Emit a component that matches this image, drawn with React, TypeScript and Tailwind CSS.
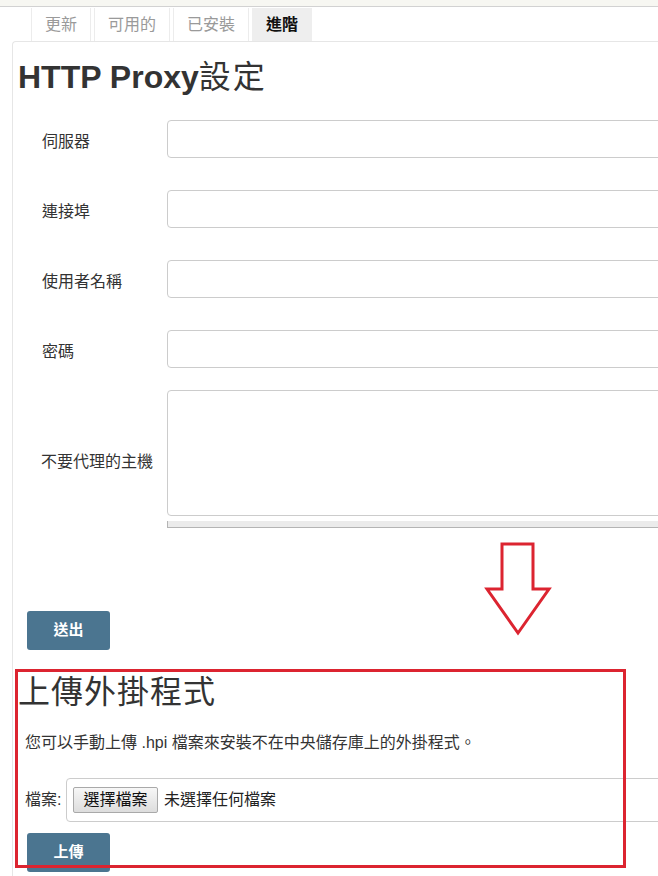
import React from 'react';

const Tab: React.FC<{ label: string; active?: boolean }> = ({ label, active = false }) => (
    <div
        className={
            active
                ? "h-full px-[14px] flex items-center bg-[#eeeeee] text-[16px] font-bold text-[#111]"
                : "h-full px-[13px] flex items-center border-l border-r border-[#ececec] text-[16px] text-[#9a9a9a]"
        }
    >
        {label}
    </div>
);

const Field: React.FC<{ label: string }> = ({ label }) => (
    <div className="flex items-center h-[38px]">
        <div className="w-[154px] shrink-0 pl-[29px] pt-[6px] text-[16px]">{label}</div>
        <div className="h-[38px] w-[520px] shrink-0 border border-[#cccccc] rounded-[4px] bg-white" />
    </div>
);

const BlueButton: React.FC<{ text: string }> = ({ text }) => (
    <button className="w-[83px] h-[39px] rounded-[3px] bg-[#4b7590] text-white text-[15px] font-bold">
        {text}
    </button>
);

export default function App() {
    return (
        <div className="relative w-[658px] h-[876px] overflow-hidden bg-white text-[#333] font-['Liberation_Sans','Noto_Sans_CJK_TC',sans-serif]">
            <div className="h-[7px] bg-[#f7f7f2] border-b border-[#d2d2d2]" />

            {/* tabs */}
            <div className="flex gap-[3px] pl-[31px] mt-[1px] h-[33px]">
                <Tab label="更新" />
                <Tab label="可用的" />
                <Tab label="已安裝" />
                <Tab label="進階" active />
            </div>

            {/* panel */}
            <div className="ml-[12px] h-[900px] border-t border-l border-[#e6e6e6] rounded-tl-[4px] pt-[15px]">
                <h1 className="pl-[5px] text-[32px] leading-[40px] font-bold">
                    HTTP Proxy<span className="font-normal tracking-[2px]">設定</span>
                </h1>

                <div className="mt-[23px] flex flex-col gap-[32px]">
                    <Field label="伺服器" />
                    <Field label="連接埠" />
                    <Field label="使用者名稱" />
                    <Field label="密碼" />
                </div>
                <div className="mt-[22px] flex items-center">
                    <div className="w-[154px] shrink-0 pl-[28px] pt-[6px] text-[16px]">不要代理的主機</div>
                    <div className="w-[520px] shrink-0">
                        <div className="h-[126px] border border-[#cccccc] rounded-[4px] bg-white" />
                        <div className="h-[7px] mt-[5px] bg-[#ebebeb] border-l border-b border-[#b4b4b4]" />
                    </div>
                </div>

                <div className="mt-[83px] pl-[14px]">
                    <BlueButton text="送出" />
                </div>

                <h2 className="mt-[22px] pl-[5px] text-[32px] leading-[40px] tracking-[1px]">上傳外掛程式</h2>

                <p className="mt-[19px] pl-[12px] text-[16px] leading-[24px]">
                    您可以手動上傳 .hpi 檔案來安裝不在中央儲存庫上的外掛程式。
                </p>

                <div className="mt-[23px] pl-[12px] flex items-center">
                    <span className="w-[41px] shrink-0 text-[16px]">檔案:</span>
                    <div className="h-[44px] w-[620px] shrink-0 flex items-center gap-[6px] pl-[6px] border border-[#cccccc] rounded-[4px]">
                        <button className="h-[26px] w-[85px] rounded-[2px] border border-[#a9a9a9] bg-gradient-to-b from-[#f7f7f7] to-[#dddddd] text-[16px] text-[#111]">
                            選擇檔案
                        </button>
                        <span className="text-[16px] text-[#222]">未選擇任何檔案</span>
                    </div>
                </div>

                <div className="mt-[11px] pl-[14px]">
                    <BlueButton text="上傳" />
                </div>
            </div>

            {/* annotations */}
            <svg className="absolute left-[484px] top-[542px]" width="68" height="95" viewBox="484 542 68 95">
                <path
                    d="M502 544 L533 544 L533 589 L549 589 L518 633 L487 589 L502 589 Z"
                    fill="none"
                    stroke="#dc2430"
                    strokeWidth="3"
                    strokeLinejoin="miter"
                />
            </svg>
            <div className="absolute left-[15px] top-[669px] w-[611px] h-[199px] border-[3px] border-[#dc2430]" />
        </div>
    );
}
